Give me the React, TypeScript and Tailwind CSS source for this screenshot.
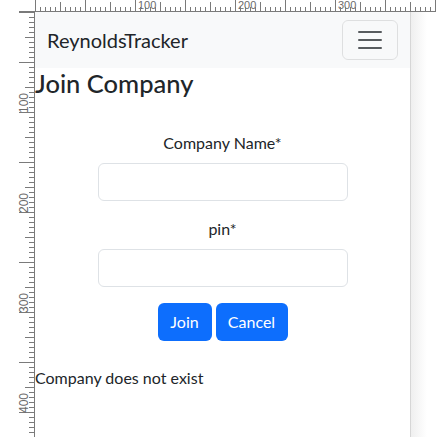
import React from "react";

const font = { fontFamily: 'Lato, "Open Sans", Arial, sans-serif' };

function TopRuler() {
  const ticks: React.ReactNode[] = [];
  for (let i = 0; i <= 400; i += 5) {
    const len = i % 50 === 0 ? 12 : i % 25 === 0 ? 10 : 5;
    ticks.push(
      <line key={i} x1={i + 0.5} x2={i + 0.5} y1={12 - len} y2={12} stroke="#7a7a7a" strokeWidth={1} />
    );
    if (i > 0 && i < 400 && i % 100 === 0) {
      ticks.push(
        <text key={"t" + i} x={i + 3} y={9} fontSize={11} fill="#6b6b6b" fontFamily="Liberation Sans, Arial, sans-serif">
          {i}
        </text>
      );
    }
  }
  return (
    <svg width={401} height={12} className="block">
      <line x1={0} x2={401} y1={11.5} y2={11.5} stroke="#7a7a7a" />
      {ticks}
    </svg>
  );
}

function LeftRuler() {
  const ticks: React.ReactNode[] = [];
  for (let i = 0; i <= 425; i += 5) {
    const x1 = i % 50 === 0 ? 19 : i % 25 === 0 ? 25 : 29;
    ticks.push(<line key={i} x1={x1} x2={35} y1={i + 0.5} y2={i + 0.5} stroke="#7a7a7a" strokeWidth={1} />);
    if (i > 0 && i % 100 === 0) {
      ticks.push(
        <text
          key={"t" + i}
          transform={`translate(28 ${i + 1}) rotate(-90)`}
          x={0}
          y={0}
          fontSize={12}
          fill="#6b6b6b"
          fontFamily="Liberation Sans, Arial, sans-serif"
        >
          {i}
        </text>
      );
    }
  }
  return (
    <svg width={35} height={425} className="block">
      <line x1={34.5} x2={34.5} y1={0} y2={425} stroke="#7a7a7a" />
      {ticks}
    </svg>
  );
}

function Navbar() {
  return (
    <nav className="h-[56px] bg-[#f8f9fa] flex items-center justify-between px-3">
      <span className="text-[20px] text-[#212529] leading-[30px]">ReynoldsTracker</span>
      <button className="w-[56px] h-[40px] border border-[rgba(0,0,0,0.1)] rounded-[6px] flex items-center justify-center">
        <svg width="30" height="30" viewBox="0 0 30 30">
          <path
            d="M4 7h22M4 15h22M4 23h22"
            stroke="rgba(33,37,41,0.75)"
            strokeWidth="2"
            strokeLinecap="round"
            strokeMiterlimit="10"
          />
        </svg>
      </button>
    </nav>
  );
}

function Field({ label }: { label: string }) {
  return (
    <div className="flex flex-col items-center">
      <label className="text-[16px] leading-[24px] text-[#212529] mb-2">{label}</label>
      <input className="w-[250px] h-[38px] border border-[#dee2e6] rounded-[6px] bg-white" />
    </div>
  );
}

export default function App() {
  return (
    <div className="w-[436px] h-[437px] overflow-hidden bg-white grid grid-cols-[35px_375px_26px] grid-rows-[12px_425px]" style={font}>
      <svg width={35} height={12} className="block">
        <line x1={19} x2={35} y1={11.5} y2={11.5} stroke="#7a7a7a" />
      </svg>
      <div className="col-span-2 overflow-hidden">
        <TopRuler />
      </div>
      <LeftRuler />
      <main className="bg-white text-[#212529]">
        <Navbar />
        <h2 className="text-[25.5px] font-medium leading-[30px]">Join Company</h2>
        <div className="pt-[33px] flex flex-col gap-4">
          <Field label="Company Name*" />
          <Field label="pin*" />
          <div className="flex justify-center gap-[4px]">
            <button className="w-[54px] h-[38px] rounded-[6px] bg-[#0d6efd] text-white text-[16px]">Join</button>
            <button className="w-[72px] h-[38px] rounded-[6px] bg-[#0d6efd] text-white text-[16px]">Cancel</button>
          </div>
        </div>
        <p className="mt-[25px] text-[16px] leading-[24px]">Company does not exist</p>
      </main>
      <div className="border-l border-[#d6d6d6] bg-[linear-gradient(to_right,#efefef,#ffffff_16px)]" />
    </div>
  );
}
